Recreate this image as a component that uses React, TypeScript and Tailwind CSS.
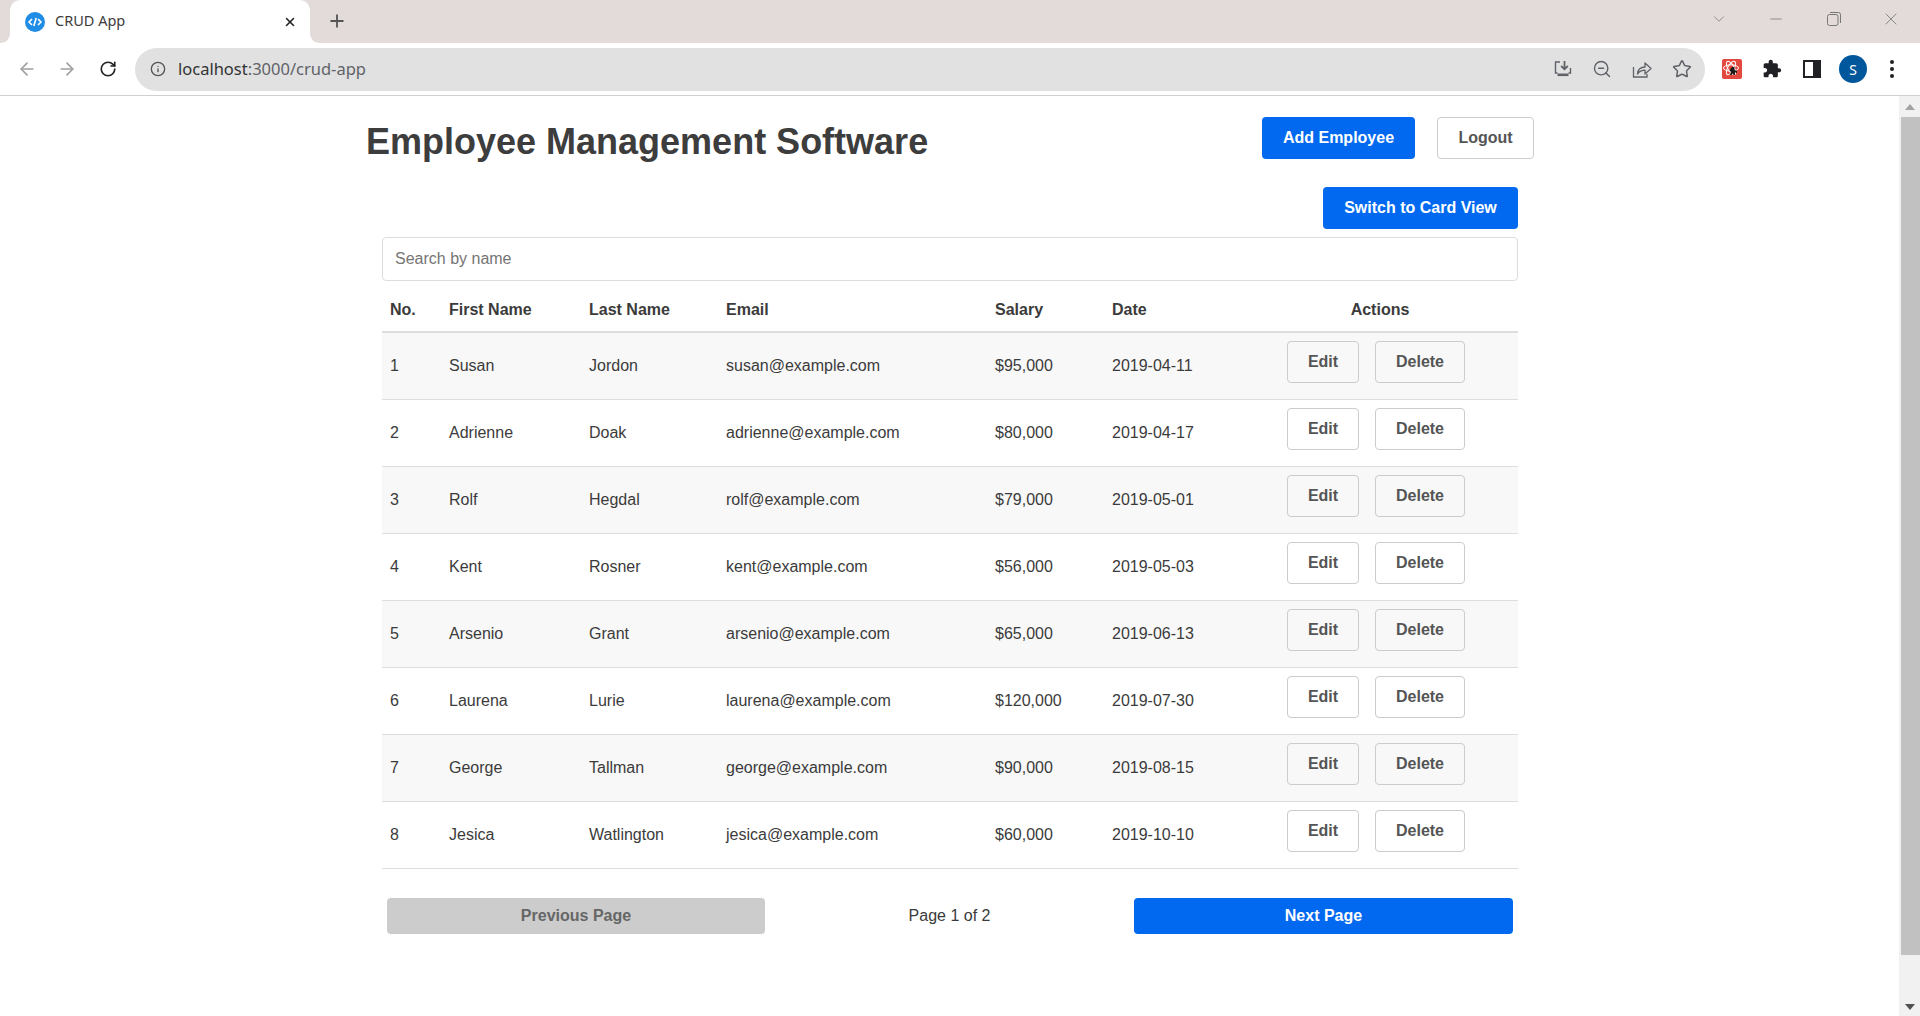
import { ArrowLeft, ArrowRight, ChevronDown, Info, Minus, Plus, RotateCw, Star, X, ZoomOut } from "lucide-react";

const employees = [
	{ id: 1, firstName: "Susan", lastName: "Jordon", email: "susan@example.com", salary: "$95,000", date: "2019-04-11" },
	{ id: 2, firstName: "Adrienne", lastName: "Doak", email: "adrienne@example.com", salary: "$80,000", date: "2019-04-17" },
	{ id: 3, firstName: "Rolf", lastName: "Hegdal", email: "rolf@example.com", salary: "$79,000", date: "2019-05-01" },
	{ id: 4, firstName: "Kent", lastName: "Rosner", email: "kent@example.com", salary: "$56,000", date: "2019-05-03" },
	{ id: 5, firstName: "Arsenio", lastName: "Grant", email: "arsenio@example.com", salary: "$65,000", date: "2019-06-13" },
	{ id: 6, firstName: "Laurena", lastName: "Lurie", email: "laurena@example.com", salary: "$120,000", date: "2019-07-30" },
	{ id: 7, firstName: "George", lastName: "Tallman", email: "george@example.com", salary: "$90,000", date: "2019-08-15" },
	{ id: 8, firstName: "Jesica", lastName: "Watlington", email: "jesica@example.com", salary: "$60,000", date: "2019-10-10" },
];

const headers = ["No.", "First Name", "Last Name", "Email", "Salary", "Date"];

function BrowserChrome() {
	return (
		<div className="shrink-0 font-['Noto_Sans',sans-serif]">
			<div className="flex h-[43px] items-end bg-[#e2dbd9]">
				<div className="relative ml-[10px] flex h-[43px] w-[300px] items-center rounded-t-[10px] bg-white pl-[15px] pr-[13px]">
					<svg className="absolute -left-[10px] bottom-0" width="10" height="10" viewBox="0 0 10 10">
						<path d="M10 0v10H0c6 0 10-4 10-10z" fill="#fff" />
					</svg>
					<svg className="absolute -right-[10px] bottom-0" width="10" height="10" viewBox="0 0 10 10">
						<path d="M0 0v10h10C4 10 0 6 0 0z" fill="#fff" />
					</svg>
					<svg width="20" height="20" viewBox="0 0 20 20">
						<circle cx="10" cy="10" r="10" fill="#1f8ce6" />
						<path d="M7 7l-3 3 3 3M13 7l3 3-3 3M11.2 6l-2.4 8" fill="none" stroke="#fff" strokeWidth="1.6" />
					</svg>
					<span className="-mt-[2px] ml-[10px] flex-1 text-[14.5px] text-[#3c3c3c]">CRUD App</span>
					<X size={14} strokeWidth={2.6} className="text-[#222]" />
				</div>
				<Plus size={20} strokeWidth={2.2} className="mb-[12px] ml-[17px] text-[#555]" />
				<div className="mb-[14px] ml-auto flex items-center text-[#777]">
					<ChevronDown size={18} strokeWidth={1} className="mr-[39px]" />
					<Minus size={18} strokeWidth={1} className="mr-[42px]" />
					<svg className="mr-[40px]" width="14" height="14" viewBox="0 0 14 14" fill="none" stroke="currentColor">
						<rect x="0.5" y="2.5" width="10.5" height="11" rx="2" />
						<path d="M3 .5h8.5a2 2 0 0 1 2 2V11" />
					</svg>
					<X size={20} strokeWidth={1} className="mr-[19px]" />
				</div>
			</div>
			<div className="flex h-[53px] items-center border-b border-[#cfcfcf] bg-white">
				<ArrowLeft size={20} strokeWidth={2} className="ml-[17px] text-[#a0a0a0]" />
				<ArrowRight size={20} strokeWidth={2} className="ml-[20px] text-[#a0a0a0]" />
				<RotateCw size={18} strokeWidth={2.2} className="ml-[22px] text-[#222]" />
				<div className="ml-[18px] flex h-[43px] w-[1570px] items-center rounded-full bg-[#e1e1e1] pl-[15px]">
					<Info size={16} strokeWidth={2} className="text-[#555]" />
					<span className="ml-[12px] mt-[1px] text-[16.5px] text-[#333]">
						localhost<span className="text-[#5f6368]">:3000/crud-app</span>
					</span>
					<div className="ml-auto mr-[13px] flex items-center text-[#5f6368]">
						<svg width="18" height="18" viewBox="0 0 18 18" fill="none" stroke="currentColor" strokeWidth="1.4">
							<path d="M6 2H1.5v11h2M14.5 13h2V8" />
							<path d="M10.5 1v8M7.2 6l3.3 3.3L13.800 6" strokeWidth="1.8" />
							<path d="M3.500 14.800h11" strokeWidth="2.6" />
						</svg>
						<ZoomOut size={20} strokeWidth={1.7} className="ml-[20px]" />
						<svg className="ml-[20px]" width="20" height="18" viewBox="0 0 20 18" fill="none" stroke="currentColor" strokeWidth="1.3">
							<path d="M1.500 7v10h13.500v-3" />
							<path d="M5.500 14c.4-4.500 3.500-7 7.500-7V3l6 5.500-6 5.500v-3.800c-3 0-5.500 1-7.500 3.800z" strokeLinejoin="round" />
						</svg>
						<Star size={20} strokeWidth={1.8} className="ml-[20px]" />
					</div>
				</div>
				<svg className="ml-[17px]" width="20" height="20" viewBox="0 0 20 20">
					<rect width="20" height="20" rx="2" fill="#e2483d" />
					<g fill="none" stroke="#fff" strokeWidth="1">
						<ellipse cx="9" cy="9" rx="7.500" ry="3.200" />
						<ellipse cx="9" cy="9" rx="7.500" ry="3.200" transform="rotate(60 9 9)" />
						<ellipse cx="9" cy="9" rx="7.500" ry="3.200" transform="rotate(120 9 9)" />
					</g>
					<path d="M10 8h2.500v3l2.500 1v2l-2-.8V16h-1.500l-.5-2-1.500 2H8l1-3.500-1.500-.5 1-2z" fill="#1a1a1a" />
				</svg>
				<svg className="ml-[20px] text-[#202124]" width="20" height="20" viewBox="0 0 24 24" fill="currentColor">
					<path d="M20.500 11H19V7c0-1.100-.9-2-2-2h-4V3.500C13 2.120 11.880 1 10.500 1S8 2.120 8 3.500V5H4c-1.100 0-1.990.9-1.990 2v3.800H3.500c1.490 0 2.700 1.210 2.700 2.700s-1.210 2.700-2.700 2.700H2V20c0 1.100.9 2 2 2h3.800v-1.500c0-1.490 1.210-2.700 2.700-2.700 1.490 0 2.700 1.210 2.700 2.700V22H17c1.100 0 2-.9 2-2v-4h1.500c1.380 0 2.500-1.120 2.500-2.500S21.880 11 20.500 11z" />
				</svg>
				<svg className="ml-[21px]" width="18" height="18" viewBox="0 0 18 18">
					<rect width="18" height="18" fill="#202124" />
					<rect x="2" y="2" width="8" height="14" fill="#fff" />
				</svg>
				<div className="ml-[18px] flex size-[28px] items-center justify-center rounded-full bg-[#01579b] text-[14px] text-white">S</div>
				<div className="ml-[23px] flex flex-col gap-[3px]">
					<span className="size-[4px] rounded-full bg-[#222]" />
					<span className="size-[4px] rounded-full bg-[#222]" />
					<span className="size-[4px] rounded-full bg-[#222]" />
				</div>
			</div>
		</div>
	);
}

function Scrollbar() {
	return (
		<div className="flex w-[21px] shrink-0 flex-col items-center bg-[#f1f1f1]">
			<svg className="mt-[8px] shrink-0" width="10" height="6" viewBox="0 0 10 6">
				<path d="M5 0l5 6H0z" fill="#a3a3a3" />
			</svg>
			<div className="ml-[2px] mt-[7px] h-[838px] w-[19px] shrink-0 bg-[#c1c1c1]" />
			<svg className="mt-auto mb-[6px] shrink-0" width="10" height="6" viewBox="0 0 10 6">
				<path d="M5 6l5-6H0z" fill="#505050" />
			</svg>
		</div>
	);
}

export default function App() {
	return (
		<div className="flex h-screen flex-col overflow-hidden bg-white font-['Liberation_Sans',Arial,sans-serif] text-[#3b3b3b]">
			<BrowserChrome />
			<div className="flex min-h-0 flex-1">
				<main className="flex-1">
					<div className="ml-[366px] w-[1168px] pt-[21px]">
						<div className="flex h-[42px] items-start">
							<h1 className="mt-[4px] flex-1 text-[36px] leading-[41px] font-bold text-[#3d3d3d]">Employee Management Software</h1>
							<button className="h-[42px] w-[153px] rounded bg-[#0069f0] text-[16px] font-bold text-white">Add Employee</button>
							<button className="ml-[22px] h-[42px] w-[97px] rounded border border-[#ccc] bg-white text-[16px] font-bold text-[#555]">Logout</button>
						</div>

						<div className="mx-4 mt-[28px]">
							<div className="flex justify-end">
								<button className="h-[42px] w-[195px] rounded bg-[#0069f0] text-[16px] font-bold text-white">Switch to Card View</button>
							</div>
							<input
								type="text"
								placeholder="Search by name"
								className="mt-2 block h-[44px] w-full rounded border border-[#ddd] bg-white px-3 text-[16px] placeholder:text-[#757575]"
							/>
							<table className="w-full table-fixed border-collapse text-left text-[16px]">
								<colgroup>
									<col className="w-[59px]" />
									<col className="w-[140px]" />
									<col className="w-[137px]" />
									<col className="w-[269px]" />
									<col className="w-[117px]" />
									<col className="w-[138px]" />
									<col />
								</colgroup>
								<thead>
									<tr className="h-[51px] border-b-2 border-[#ddd]">
										{headers.map((label) => (
											<th key={label} className="px-2 pb-[9px] align-bottom font-bold">
												{label}
											</th>
										))}
										<th className="px-2 pb-[9px] text-center align-bottom font-bold">Actions</th>
									</tr>
								</thead>
								<tbody>
									{employees.map((employee) => (
										<tr key={employee.id} className="h-[67px] border-b border-[#ddd] odd:bg-[#f8f8f8]">
											<td className="px-2">{employee.id}</td>
											<td className="px-2">{employee.firstName}</td>
											<td className="px-2">{employee.lastName}</td>
											<td className="px-2">{employee.email}</td>
											<td className="px-2">{employee.salary}</td>
											<td className="px-2">{employee.date}</td>
											<td className="px-2">
												<div className="mb-2 flex justify-center gap-4 pr-2">
													<button className="h-[42px] w-[72px] rounded border border-[#ccc] text-[16px] font-bold text-[#555]">Edit</button>
													<button className="h-[42px] w-[90px] rounded border border-[#ccc] text-[16px] font-bold text-[#555]">Delete</button>
												</div>
											</td>
										</tr>
									))}
								</tbody>
							</table>
							<div className="mt-[29px] flex items-center justify-between px-[5px]">
								<button className="h-[36px] w-[378px] rounded bg-[#ccc] text-[16px] font-bold text-[#666]">Previous Page</button>
								<span className="text-[16px]">Page 1 of 2</span>
								<button className="h-[36px] w-[379px] rounded bg-[#0069f0] text-[16px] font-bold text-white">Next Page</button>
							</div>
						</div>
					</div>
				</main>
				<Scrollbar />
			</div>
		</div>
	);
}
